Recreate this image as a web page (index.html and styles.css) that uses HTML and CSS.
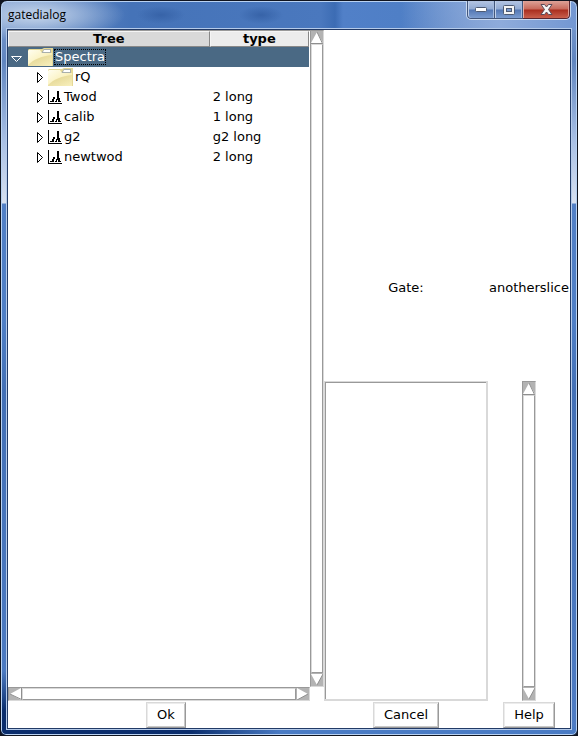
FILE: index.html
```html
<!DOCTYPE html>
<html lang="en">
<head>
<meta charset="utf-8">
<title>gatedialog</title>
<link rel="stylesheet" href="styles.css">
</head>
<body>
<svg class="defs" aria-hidden="true">
  <defs>
    <linearGradient id="paper" x1="0" y1="0" x2="1" y2="1">
      <stop offset="0" stop-color="#fffef0"/>
      <stop offset="0.5" stop-color="#fbf3c4"/>
      <stop offset="1" stop-color="#ecdc8c"/>
    </linearGradient>
    <linearGradient id="sheen" x1="0" y1="0" x2="1" y2="1">
      <stop offset="0" stop-color="#cdb95e"/>
      <stop offset="1" stop-color="#fdf8d2"/>
    </linearGradient>
  </defs>
  <symbol id="folder" viewBox="0 0 25 18">
    <path d="M0 2L1 1H14L16 0H25V18H0Z" fill="#e6d995"/>
    <path d="M13 5L16 1H23V5Z" fill="#a9afac"/>
    <path d="M16 2H22V4H15Z" fill="#fff"/>
    <path d="M1 2H12L14 5H24V18H0V3Z" fill="url(#paper)"/>
    <path d="M0 17C6 11 14 8 24 7V18H0Z" fill="url(#sheen)" opacity=".7"/>
  </symbol>
  <symbol id="spectrum" viewBox="0 0 14 14">
    <path d="M0 0h1v13h13v1H0zM2 12V11h2V9h1V7h2v2h-1v3zM7 11h1V9h1V1h2v7h1v3h1v1h-3v-2h-1v2H7z" fill="#000"/>
  </symbol>
  <symbol id="closed" viewBox="0 0 7 11">
    <path d="M.5 .5V10.500L5.500 5.500Z" fill="#fff" stroke="#000"/>
  </symbol>
  <symbol id="up" viewBox="0 0 12 13">
    <path d="M6 1L0 12H12Z" fill="#fff"/>
    <path d="M6 1L11.500 12.500H0" fill="none" stroke="#8e8e8e"/>
  </symbol>
  <symbol id="down" viewBox="0 0 12 13">
    <path d="M0 1H12L6 12Z" fill="#fff"/>
    <path d="M12 1L6 12" fill="none" stroke="#8e8e8e"/>
  </symbol>
  <symbol id="left" viewBox="0 0 13 12">
    <path d="M1 6L12 0V12Z" fill="#fff"/>
    <path d="M1 6L12.500 11.500V0" fill="none" stroke="#8e8e8e"/>
  </symbol>
  <symbol id="right" viewBox="0 0 13 12">
    <path d="M1 0V12L12 6Z" fill="#fff"/>
    <path d="M1 12L12 6" fill="none" stroke="#8e8e8e"/>
  </symbol>
</svg>

<div class="window">
  <header class="titlebar">
    <h1 class="title">gatedialog</h1>
    <div class="controls">
      <button class="control" aria-label="Minimize">
        <svg width="14" height="7" viewBox="0 0 14 7"><rect x="1.500" y="1.500" width="11" height="4" rx="1" fill="#fff" stroke="#4d5a73"/></svg>
      </button>
      <button class="control" aria-label="Maximize">
        <svg width="12" height="10" viewBox="0 0 12 10"><rect x=".5" y=".5" width="11" height="9" rx="1" fill="#f4f4f4" stroke="#4d5a73"/><rect x="3.500" y="3.500" width="5" height="3" fill="#7a9bd0" stroke="#4d5a73"/></svg>
      </button>
      <button class="control close" aria-label="Close">
        <svg width="13" height="11" viewBox="0 0 13 11"><path d="M1 .5H4.500L6.500 3L8.500 .5H12L8.500 5.500L12 10.500H8.500L6.500 8L4.500 10.500H1L4.500 5.500Z" fill="#f6f6f6" stroke="#5a4a58"/></svg>
      </button>
    </div>
  </header>

  <main class="dialog">
    <section class="browser">
      <div class="tree-pane">
        <table class="tree">
          <thead>
            <tr><th class="name-head">Tree</th><th class="type-head">type</th></tr>
          </thead>
          <tbody>
            <tr class="selected">
              <td><div class="node root"><svg class="open" width="12" height="7" viewBox="0 0 12 7"><path d="M.5 .5H10.500L5.500 5.500Z" fill="none" stroke="#fff"/></svg><svg class="folder"><use href="#folder"/></svg><span class="label focus">Spectra</span></div></td>
              <td></td>
            </tr>
            <tr>
              <td><div class="node"><svg class="twisty"><use href="#closed"/></svg><svg class="folder"><use href="#folder"/></svg><span class="label">rQ</span></div></td>
              <td></td>
            </tr>
            <tr>
              <td><div class="node"><svg class="twisty"><use href="#closed"/></svg><svg class="spectrum"><use href="#spectrum"/></svg><span class="label">Twod</span></div></td>
              <td>2 long</td>
            </tr>
            <tr>
              <td><div class="node"><svg class="twisty"><use href="#closed"/></svg><svg class="spectrum"><use href="#spectrum"/></svg><span class="label">calib</span></div></td>
              <td>1 long</td>
            </tr>
            <tr>
              <td><div class="node"><svg class="twisty"><use href="#closed"/></svg><svg class="spectrum"><use href="#spectrum"/></svg><span class="label">g2</span></div></td>
              <td>g2 long</td>
            </tr>
            <tr>
              <td><div class="node"><svg class="twisty"><use href="#closed"/></svg><svg class="spectrum"><use href="#spectrum"/></svg><span class="label">newtwod</span></div></td>
              <td>2 long</td>
            </tr>
          </tbody>
        </table>
      </div>
      <div class="scroll vertical">
        <button class="arrow" aria-label="Scroll up"><svg><use href="#up"/></svg></button>
        <div class="thumb"></div>
        <button class="arrow" aria-label="Scroll down"><svg><use href="#down"/></svg></button>
      </div>
      <div class="scroll horizontal">
        <button class="arrow" aria-label="Scroll left"><svg><use href="#left"/></svg></button>
        <div class="thumb"></div>
        <button class="arrow" aria-label="Scroll right"><svg><use href="#right"/></svg></button>
      </div>
    </section>

    <section class="gate">
      <div class="gate-name">
        <span class="caption">Gate:</span>
        <output class="value">anotherslice</output>
      </div>
      <div class="points">
        <div class="point-list" role="listbox" aria-label="Points"></div>
        <div class="scroll vertical">
          <button class="arrow" aria-label="Scroll up"><svg><use href="#up"/></svg></button>
          <div class="thumb"></div>
          <button class="arrow" aria-label="Scroll down"><svg><use href="#down"/></svg></button>
        </div>
      </div>
    </section>

    <footer class="actions">
      <button class="action">Ok</button>
      <button class="action">Cancel</button>
      <button class="action">Help</button>
    </footer>
  </main>
</div>
</body>
</html>
```
FILE: styles.css
```css
* {
  box-sizing: border-box;
}

body {
  margin: 0;
  background: #10141f;
  color: #000;
  font: 13px/18px "DejaVu Sans", sans-serif;
}

button {
  margin: 0;
  padding: 0;
  border: 0;
  border-radius: 0;
  color: inherit;
  font: inherit;
}

svg {
  display: block;
  flex: none;
}

.defs {
  position: absolute;
  width: 0;
  height: 0;
}

/* Window frame */
.window {
  display: flex;
  flex-direction: column;
  height: 100vh;
  padding: 0 6px 6px;
  border: 1px solid #10141f;
  border-radius: 7px 7px 6px 6px;
  box-shadow: inset 0 0 0 1px #b9d2f2;
  background:
    linear-gradient(transparent 670px, #0a2d6c 710px) left bottom / 8px 100% no-repeat,
    linear-gradient(90deg, #0a2d6c, #0a2d6c 190px, #4a7bc4 280px) left bottom / 100% 8px no-repeat,
    radial-gradient(ellipse 24px 9px at 160px 14px, #3763a8, transparent) no-repeat,
    radial-gradient(ellipse 22px 9px at 260px 14px, #3763a8, transparent) no-repeat,
    radial-gradient(ellipse 90px 26px at 34px 14px, #b4c8e4 20%, transparent) no-repeat,
    linear-gradient(90deg, transparent 400px, #8eabdb 500px, #7397d2) left top / 100% 29px no-repeat,
    linear-gradient(90deg, transparent, #4573b8 130px, #4a78be 320px, #3c6cb4 334px, #5180c8 342px, #4f7fc6 400px, transparent 500px) left top / 100% 29px no-repeat,
    linear-gradient(#7f9fd2 0, #6085bf 60px, #a9c0e5 140px, #d8e1f0 202px, #5280c6 203px, #4f7fc6 320px, #4370b6 390px, #4e7cc4 100%);
}

.titlebar {
  display: flex;
  justify-content: space-between;
  height: 28px;
  flex: none;
}

.title {
  margin: 0;
  padding: 5px 0 0 1px;
  font: 12px/18px "Open Sans", sans-serif;
}

.controls {
  display: flex;
  height: 19px;
  border: 1px solid #c9d9f0;
  border-top: 0;
  border-radius: 0 0 5px 5px;
  overflow: hidden;
}

.control {
  display: flex;
  align-items: center;
  justify-content: center;
  width: 28px;
  border: 1px solid #43577c;
  border-top: 0;
  border-left: 0;
  box-shadow: inset 1px 0 #c1d1ea, inset -1px 0 #a5badd;
  background: linear-gradient(#b3c4e2, #91aad3 48%, #5377b4 52%, #7b9cd0);
}

.control:first-child {
  border-left: 1px solid #43577c;
  border-bottom-left-radius: 4px;
}

.control.close {
  width: 47px;
  border-color: #5a2630;
  border-bottom-right-radius: 4px;
  box-shadow: inset 1px 0 #e6aba2, inset -1px 0 #dc9b92;
  background: linear-gradient(#dda298, #c8695b 48%, #a92d1e 52%, #c95f4c);
}

/* Dialog body */
.dialog {
  display: grid;
  grid-template-columns: 316fr 246fr;
  grid-template-rows: 1fr auto;
  flex: 1;
  min-height: 0;
  border: 1px solid #223a66;
  box-shadow: 0 0 0 1px #b5cbea;
  background: #fff;
}

.browser {
  display: grid;
  grid-template-columns: 1fr 14px;
  grid-template-rows: 1fr 14px;
}

.tree-pane {
  border-top: 1px solid #999;
  padding-right: 1px;
}

.tree {
  width: 100%;
  table-layout: fixed;
  border-collapse: separate;
  border-spacing: 0;
}

.tree th {
  height: 16px;
  padding: 0;
  border: 1px solid #f5f5f5;
  border-right-color: #888;
  border-bottom-color: #888;
  font-size: 13px;
  font-weight: bold;
  line-height: 14px;
}

.tree .name-head {
  width: 67%;
  background: #d9d9d9;
}

.tree .type-head {
  background: #ececec;
}

.tree td {
  height: 20px;
  padding: 0 0 0 3px;
}

.selected {
  background: #4a6984;
  color: #fff;
}

.node {
  display: flex;
  align-items: center;
  height: 20px;
  padding-left: 26px;
}

.node.root {
  padding-left: 0;
}

.open {
  margin: 5px 5px 0 0;
}

.twisty {
  width: 7px;
  height: 11px;
  margin-right: 4px;
}

.folder {
  width: 25px;
  height: 18px;
  margin-right: 1px;
}

.spectrum {
  width: 14px;
  height: 14px;
  margin-right: 1px;
}

.label {
  padding: 0 1px;
  line-height: 16px;
}

.focus {
  outline: 1px dotted #000;
  outline-offset: -1px;
}

/* Scrollbars */
.scroll {
  display: flex;
  border: 1px solid #999;
  border-right-color: #d9d9d9;
  border-bottom-color: #d9d9d9;
  background: #b3b3b3;
}

.vertical {
  flex-direction: column;
  width: 14px;
}

.horizontal {
  height: 14px;
}

.thumb {
  flex: 1;
  border: 1px solid #d9d9d9;
  border-right-color: #999;
  border-bottom-color: #999;
  background: #fff;
}

.arrow {
  flex: none;
  background: #b3b3b3;
}

.vertical .arrow,
.vertical .arrow svg {
  width: 12px;
  height: 13px;
}

.horizontal .arrow,
.horizontal .arrow svg {
  width: 13px;
  height: 12px;
}

/* Gate editor */
.gate {
  display: grid;
  grid-template-rows: 351fr 320fr;
}

.gate-name,
.points {
  display: grid;
  grid-template-columns: 2fr 1fr;
  justify-items: center;
}

.gate-name {
  align-items: center;
  padding-top: 164px;
}

.point-list {
  justify-self: stretch;
  border: 2px solid #d9d9d9;
  border-top: 1px solid #d9d9d9;
  border-left: 1px solid #d9d9d9;
  box-shadow: inset 1px 1px #999;
}

/* Buttons */
.actions {
  display: grid;
  grid-column: 1 / -1;
  grid-template-columns: 316fr 164fr 82fr;
  justify-items: center;
  padding-top: 1px;
}

.action {
  height: 26px;
  padding: 0 10px;
  border: 1px solid #d9d9d9;
  border-right-color: #999;
  border-bottom-color: #999;
  box-shadow: inset 1px 1px #ececec, inset -1px -1px #c8c8c8;
  background: #fff;
}
```
